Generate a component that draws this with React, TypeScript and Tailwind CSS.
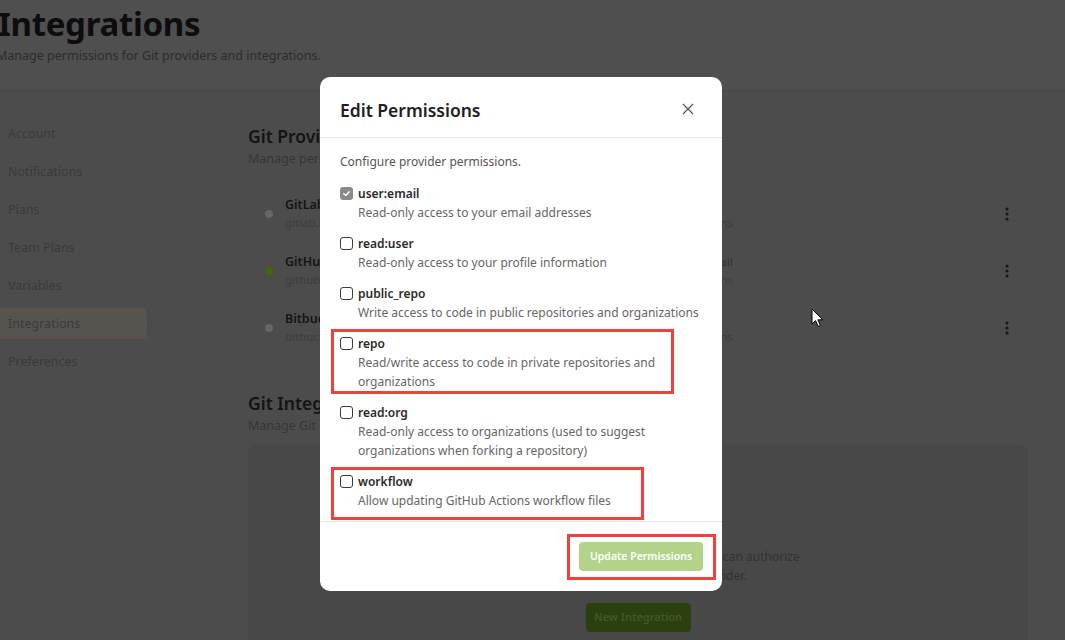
import React from "react";

const perms = [
  { id: "user:email", desc: "Read-only access to your email addresses", checked: true },
  { id: "read:user", desc: "Read-only access to your profile information" },
  { id: "public_repo", desc: "Write access to code in public repositories and organizations" },
  { id: "repo", desc: "Read/write access to code in private repositories and organizations" },
  { id: "read:org", desc: "Read-only access to organizations (used to suggest organizations when forking a repository)" },
  { id: "workflow", desc: "Allow updating GitHub Actions workflow files" },
];

const navItems = ["Account", "Notifications", "Plans", "Team Plans", "Variables", "Integrations", "Preferences"];

const providers = [
  { name: "GitLab", url: "gitlab.com", dot: "bg-[#666666]", l1: "\u00a0", l2: "3 permissions" },
  { name: "GitHub", url: "github.com", dot: "bg-[#3f6a0c]", l1: "user@gmail", l2: "6 permissions" },
  { name: "Bitbucket", url: "bitbucket.org", dot: "bg-[#666666]", l1: "\u00a0", l2: "2 permissions" },
];

function Kebab() {
  return (
    <svg width="6" height="14" viewBox="0 0 6 14" className="text-[#161616]">
      <circle cx="3" cy="2" r="1.5" fill="currentColor" />
      <circle cx="3" cy="7" r="1.5" fill="currentColor" />
      <circle cx="3" cy="12" r="1.5" fill="currentColor" />
    </svg>
  );
}

function Checkbox({ checked }: { checked?: boolean }) {
  if (checked) {
    return (
      <div className="w-[13px] h-[13px] rounded-[3px] bg-[#8a8a8a] flex items-center justify-center shrink-0">
        <svg width="9" height="9" viewBox="0 0 10 10">
          <path d="M2 5.2 L4.2 7.3 L8 3" stroke="white" strokeWidth="1.6" fill="none" strokeLinecap="round" strokeLinejoin="round" />
        </svg>
      </div>
    );
  }
  return <div className="w-[13px] h-[13px] rounded-[3px] border-[1.5px] border-[#3a3a3a] bg-white shrink-0" />;
}

export default function App() {
  return (
    <div
      className="relative w-[1065px] h-[640px] overflow-hidden bg-[#4c4c4c]"
      style={{ fontFamily: '"Noto Sans", "Open Sans", sans-serif' }}
    >
      {/* Header */}
      <div className="h-[91px] bg-[#4f4f4f] border-b border-[#474747] -ml-[2px] pt-[2px]">
        <h1 className="text-[33px] leading-[44px] font-bold text-[#0d0d0d] tracking-[-0.3px]">Integrations</h1>
        <p className="text-[12.5px] leading-[20px] text-[#2c2c2c] -ml-[2px]">
          Manage permissions for Git providers and integrations.
        </p>
      </div>

      <div className="flex">
        {/* Sidebar */}
        <div className="w-[147px] pt-[27px] flex flex-col gap-[7px]">
          {navItems.map((n) => (
            <div
              key={n}
              className={`h-[31px] flex items-center pl-[8px] pt-[2px] text-[12.5px] rounded-r-[5px] text-[#3a3a3a] ${
                n === "Integrations" ? "bg-[#57544f]" : ""
              }`}
            >
              {n}
            </div>
          ))}
        </div>

        {/* Main */}
        <div className="flex-1 pl-[101px] pr-[37px] pt-[33px]">
          <h2 className="text-[17.5px] leading-[24px] font-semibold text-[#141414]">Git Providers</h2>
          <p className="text-[12.5px] leading-[20px] mt-[1px] text-[#363636]">Manage permissions for Git providers.</p>

          <div className="mt-[16px] flex flex-col">
            {providers.map((p) => (
              <div key={p.name} className="h-[57px] flex items-center pl-[17px] pr-[18px]">
                <div className={`w-[8px] h-[8px] rounded-full ${p.dot}`} />
                <div className="ml-[12px] w-[200px]">
                  <div className="text-[12.5px] leading-[18px] font-semibold text-[#141414]">{p.name}</div>
                  <div className="text-[11.5px] leading-[18px] text-[#3c3c3c]">{p.url}</div>
                </div>
                <div className="w-[248px] text-right">
                  <div className="text-[11.5px] leading-[18px] text-[#303030]">{p.l1}</div>
                  <div className="text-[11.5px] leading-[18px] text-[#3e3e3e]">{p.l2}</div>
                </div>
                <div className="flex-1" />
                <Kebab />
              </div>
            ))}
          </div>

          <h2 className="mt-[35px] text-[17.5px] leading-[24px] font-semibold text-[#141414]">Git Integrations</h2>
          <p className="text-[12.5px] leading-[20px] mt-[1px] text-[#363636]">Manage Git integrations for your organization.</p>

          <div className="mt-[9px] h-[220px] rounded-[8px] bg-[#484848] border border-[#464646] flex flex-col items-center pt-[101px]">
            <p className="text-[12px] leading-[19px] text-[#333] text-center whitespace-nowrap">
              Create a Git integration so your teammates can authorize
              <br />
              access to your self-hosted Git provider.
            </p>
            <div className="mt-[18px] h-[29px] w-[105px] rounded-[4px] bg-[#2c400f] text-[#3f5a25] text-[11px] font-semibold flex items-center justify-center">
              New Integration
            </div>
          </div>
        </div>
      </div>

      {/* Modal */}
      <div className="absolute left-[320px] top-[77px] w-[402px] h-[514px] bg-white rounded-[10px] flex flex-col overflow-hidden">
        <div className="h-[61px] flex items-center justify-between pl-[20px] pr-[28px] border-b border-[#e6e6e6] shrink-0">
          <div className="text-[17.5px] font-semibold text-[#1e1e1e] mt-[6px]">Edit Permissions</div>
          <svg width="12" height="12" viewBox="0 0 12 12" className="mt-[4px]">
            <path d="M1 1 L11 11 M11 1 L1 11" stroke="#555" strokeWidth="1.2" />
          </svg>
        </div>
        <div className="flex-1 min-h-0 overflow-hidden pl-[20px] pr-[20px] pt-[14px] border-b border-[#e6e6e6]">
          <p className="text-[12px] leading-[19px] text-[#555]">Configure provider permissions.</p>
          <div className="mt-[13px] flex flex-col gap-[12px]">
            {perms.map((p) => (
              <div key={p.id} className="flex gap-[5px]">
                <div className="pt-[3px]">
                  <Checkbox checked={p.checked} />
                </div>
                <div>
                  <div className="text-[12px] leading-[19px] font-semibold text-[#2a2a2a]">{p.id}</div>
                  <div className="text-[12px] leading-[19px] text-[#666]">{p.desc}</div>
                </div>
              </div>
            ))}
          </div>
        </div>
        <div className="h-[69px] flex items-center justify-end pr-[19px] shrink-0">
          <div className="h-[29px] w-[124px] rounded-[4px] bg-[#b3d38a] text-white text-[10.5px] font-semibold flex items-center justify-center">
            Update Permissions
          </div>
        </div>
      </div>

      {/* Annotation boxes */}
      <div className="absolute left-[331px] top-[329px] w-[343px] h-[65px] border-[3px] border-[#f2403f]" />
      <div className="absolute left-[331px] top-[467px] w-[313px] h-[53px] border-[3px] border-[#f2403f]" />
      <div className="absolute left-[567px] top-[534px] w-[149px] h-[46px] border-[3px] border-[#f2403f]" />

      {/* Cursor */}
      <svg className="absolute left-[811px] top-[308px]" width="14" height="20" viewBox="0 0 14 20">
        <path d="M1 1 L1 16 L4.6 12.6 L7.2 18.5 L9.4 17.5 L6.9 11.8 L11.8 11.8 Z" fill="white" stroke="black" strokeWidth="1" strokeLinejoin="round" />
      </svg>
    </div>
  );
}
